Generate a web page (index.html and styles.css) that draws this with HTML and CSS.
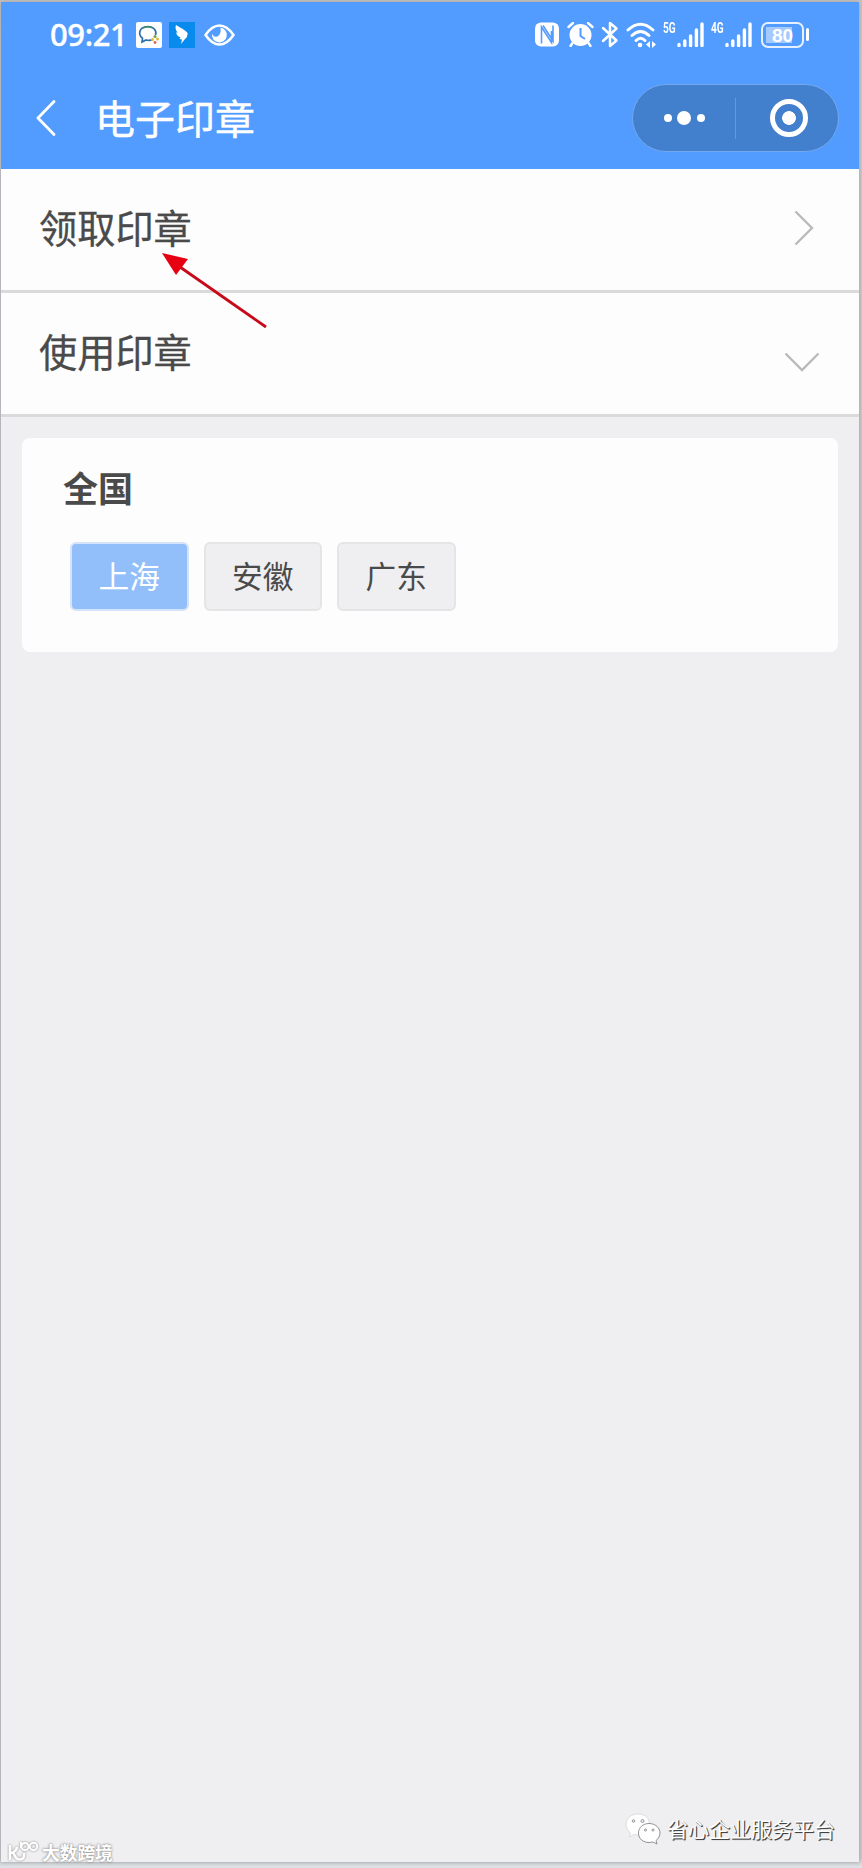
FILE: index.html
```
<!DOCTYPE html>
<html lang="zh-CN">
<head>
    <meta charset="UTF-8">
    <meta name="viewport" content="width=device-width, initial-scale=1.0">
    <title>电子印章</title>
    <link rel="stylesheet" href="styles.css">
</head>
<body>
    <div class="screen">
        <div class="header">
            <div class="status-bar">
                <span class="time">09:21</span>
                <svg class="app-icon" width="26" height="26" viewBox="0 0 26 26">
                    <rect width="26" height="26" rx="2" fill="#fff"/>
                    <path d="M17 17.500Q14 19 10 18L6 20L6.500 16.300C2 13 2.500 5 11.500 4.500C18 4.500 21 9 19.500 13" fill="none" stroke="#2b70a8" stroke-width="1.700"/>
                    <path d="M7 6.200Q11 3.500 16 5.700" fill="none" stroke="#438b61" stroke-width="1.500"/>
                    <circle cx="19" cy="14.500" r="1.600" fill="#78a84b"/>
                    <circle cx="16.500" cy="17.500" r="1.500" fill="#e9bd32"/>
                    <circle cx="21.500" cy="17" r="1.500" fill="#e5b640"/>
                    <circle cx="19" cy="20.500" r="1.400" fill="#de6548"/>
                </svg>
                <svg class="app-icon" width="26" height="26" viewBox="0 0 26 26">
                    <rect width="26" height="26" fill="#098bed"/>
                    <path d="M7 3C11 6 17 8 18.500 11C19 13 17.500 14 18 15L16 17L12 22L13 17.500L10.500 17L11.500 15.500C8 14 7 12 7.500 10L9 11C6.500 8 6 6 7 3Z" fill="#fff"/>
                </svg>
                <svg class="eye" width="31" height="22" viewBox="0 0 31 22">
                    <path d="M1.500 11Q8 1.500 15.500 1.500T29.500 11Q23 20.500 15.500 20.500T1.500 11Z" fill="none" stroke="#fff" stroke-width="2.600" stroke-linejoin="round"/>
                    <path d="M16.500 3.500A7.500 7.500 0 1 1 8 9.500Q9.500 13.500 13.500 12.500Q17.500 10 16.500 3.500Z" fill="#fff"/>
                </svg>
                <div class="status-right">
                    <svg width="24" height="25" viewBox="0 0 24 25">
                        <rect x="0" y="0.500" width="24" height="24" rx="6" fill="#fff"/>
                        <path d="M6.500 21.500V5L16.500 20.500V9M8 3.500L18 19V3.500" fill="none" stroke="#529bff" stroke-width="1.600"/>
                    </svg>
                    <svg class="alarm" width="27" height="25" viewBox="0 0 27 25">
                        <circle cx="13.500" cy="13" r="11" fill="#fff"/>
                        <path d="M1.500 5L6 1M21 1L25.500 5M5.500 21L3.500 24M21.500 21L23.500 24" stroke="#fff" stroke-width="2.400" stroke-linecap="round"/>
                        <path d="M13.500 6V14L18 17" fill="none" stroke="#529bff" stroke-width="2"/>
                    </svg>
                    <svg class="bluetooth" width="18" height="27" viewBox="0 0 18 27">
                        <path d="M2 7L15.500 19.500L9 25V2L15.500 7.500L2 20" fill="none" stroke="#fff" stroke-width="2.500" stroke-linejoin="round" stroke-linecap="round"/>
                    </svg>
                    <svg class="wifi" width="31" height="26" viewBox="0 0 31 26">
                        <path d="M2 8Q14.500-3.500 27 8M6 13.500Q14.500 5.500 23 13.500M10 18.500Q14.500 14 19 18.500" fill="none" stroke="#fff" stroke-width="2.900" stroke-linecap="round"/>
                        <circle cx="14" cy="23" r="2.300" fill="#fff"/>
                        <path d="M24 19V26L20 22.500ZM26 19V26L30 22.500Z" fill="#fff"/>
                    </svg>
                    <span class="net">5G</span>
                    <svg class="signal" width="27" height="25" viewBox="0 0 27 25">
                        <path d="M2 22.500V23.500M7.800 19V23.500M13.600 14V23.500M19.400 8V23.500M25 2V23.500" stroke="#fff" stroke-width="3.400" stroke-linecap="round"/>
                    </svg>
                    <span class="net net-4g">4G</span>
                    <svg class="signal" width="27" height="25" viewBox="0 0 27 25">
                        <path d="M2 22.500V23.500M7.800 19V23.500M13.600 14V23.500M19.400 8V23.500M25 2V23.500" stroke="#fff" stroke-width="3.400" stroke-linecap="round"/>
                    </svg>
                    <div class="battery"><span>80</span></div>
                    <div class="battery-tip"></div>
                </div>
            </div>
            <div class="navbar">
                <svg class="back" width="20" height="36" viewBox="0 0 20 36">
                    <path d="M18 1.500L2 18L18 34.500" fill="none" stroke="#fff" stroke-width="2.800" stroke-linejoin="round" stroke-linecap="round"/>
                </svg>
                <h1>电子印章</h1>
                <div class="capsule">
                    <div class="half dots">
                        <i></i><i class="big"></i><i></i>
                    </div>
                    <div class="divider"></div>
                    <div class="half">
                        <div class="ring"></div>
                    </div>
                </div>
            </div>
        </div>

        <div class="row">
            <span>领取印章</span>
            <svg class="arrow-right" width="20" height="36" viewBox="0 0 20 36">
                <path d="M1.500 1.500L18 18L1.500 34.500" fill="none" stroke="#b9b9b9" stroke-width="2.300"/>
            </svg>
        </div>
        <div class="row">
            <span>使用印章</span>
            <svg class="arrow-down" width="36" height="20" viewBox="0 0 36 20">
                <path d="M1.500 1.500L18 18L34.500 1.500" fill="none" stroke="#b9b9b9" stroke-width="2.300"/>
            </svg>
        </div>

        <div class="card">
            <h2>全国</h2>
            <div class="chips">
                <div class="chip active">上海</div>
                <div class="chip">安徽</div>
                <div class="chip">广东</div>
            </div>
        </div>
    </div>

    <!-- red pointer over the first row -->
    <svg class="pointer" width="110" height="80" viewBox="0 0 110 80">
        <path d="M20 14L106 74" stroke="#c70a1a" stroke-width="2.800"/>
        <path d="M2 0L28 6L16 22Z" fill="#e60012"/>
    </svg>

    <div class="account">
        <svg width="36" height="32" viewBox="0 0 36 32">
            <path d="M13 1C5.500 1 1 6 1 11.500C1 15 3 18 5.500 20L4.500 24L9 21.500C18 23.500 24.500 18 24.500 11.500C24.500 5 20 1 13 1Z" fill="#fff" stroke="#c9c9c9" stroke-width="0.600"/>
            <path d="M24 10.500C17.500 10.500 13.500 15 13.500 20C13.500 26 18.500 29.500 24 29.500L28 29L32 31L31 27.500C33.500 25.500 35 23 35 20C35 15 30.500 10.500 24 10.500Z" fill="#fff" stroke="#777" stroke-width="0.800"/>
            <g fill="#efeff1" stroke="#777" stroke-width="0.700">
                <circle cx="8.500" cy="8" r="1.300"/><circle cx="17.500" cy="8" r="1.500"/>
                <circle cx="20.500" cy="17" r="1.100"/><circle cx="28" cy="17" r="1.100"/>
            </g>
        </svg>
        <span>省心企业服务平台</span>
    </div>

    <div class="source">
        <svg width="32" height="21" viewBox="0 0 32 21">
            <g fill="none" stroke="#fff" stroke-width="2.500">
                <path d="M2 4V19M3 12Q8 11 9 6M5 11Q8 19 12 18.500Q17 18 16 12"/>
                <path d="M13 1V7" stroke-width="1.900"/>
                <circle cx="17" cy="5.500" r="3.500" stroke-width="1.900"/>
                <circle cx="25.500" cy="5.500" r="3.700" stroke-width="1.900"/>
            </g>
        </svg>
        <span>大数跨境</span>
    </div>
</body>
</html>
```
FILE: styles.css
```
* {
    box-sizing: border-box;
}

body {
    margin: 0;
    padding: 2px 3px 6px 1px;
    height: 1868px;
    position: relative;
    overflow: hidden;
    background: linear-gradient(#c6c3bf, #c8cace 60px, #c8cace 1858px, #e0e4e8);
    font-family: "Noto Sans CJK SC", sans-serif;
    color: #4a4a4a;
}

svg {
    display: block;
    flex-shrink: 0;
}

.screen {
    height: 1860px;
    background-color: #efeff1;
    box-shadow: 0 0 4px #999c9f;
}

.header {
    height: 167px;
    background-color: #529bff;
    color: #fff;
}

.status-bar {
    height: 65px;
    padding: 0 50px 0 49px;
    display: flex;
    align-items: center;
}

.time {
    width: 86px;
    margin-top: -2px;
    font-family: "Noto Sans", sans-serif;
    font-size: 31px;
    font-weight: 500;
    line-height: 40px;
    letter-spacing: -0.4px;
    white-space: nowrap;
    -webkit-text-stroke: 0.4px #fff;
}

.app-icon {
    margin-right: 7px;
}

.eye {
    margin-left: 2px;
}

.status-right {
    display: flex;
    align-items: center;
    margin-left: auto;
}

.alarm {
    margin-left: 8px;
}

.bluetooth {
    margin-left: 7.5px;
}

.wifi {
    margin-left: 7px;
}

.net {
    width: 14px;
    margin: 0 0 14px 6px;
    font-family: Roboto, sans-serif;
    font-size: 14px;
    font-weight: 700;
    line-height: 14px;
    transform: scaleX(0.72);
    transform-origin: left;
}

.net-4g {
    margin-left: 7px;
}

.battery {
    margin-left: 9px;
    width: 43px;
    height: 26px;
    padding: 3px;
    border: 2px solid #e6f1ff;
    border-radius: 7px;
}

.battery span {
    display: block;
    height: 16px;
    background: linear-gradient(90deg, #a4caff 80%, transparent 80%);
    font: bold 19px/17px "Liberation Sans", sans-serif;
    text-align: center;
}

.battery-tip {
    width: 3px;
    height: 13px;
    margin-left: 2px;
    border-radius: 2px;
    background-color: #fff;
}

.navbar {
    height: 102px;
    padding: 0 20px 0 35px;
    display: flex;
    align-items: center;
}

.navbar h1 {
    margin: -3px 0 0 39px;
    font-size: 40px;
    font-weight: 400;
    line-height: 60px;
    -webkit-text-stroke: 0.4px #fff;
}

.capsule {
    width: 207px;
    height: 68px;
    margin-left: auto;
    display: flex;
    align-items: center;
    background-color: #427fcd;
    border: 1px solid #72a8ee;
    border-radius: 34px;
}

.half {
    flex: 1;
    display: flex;
    justify-content: center;
    align-items: center;
    gap: 5.5px;
}

.dots i {
    width: 8px;
    height: 8px;
    border-radius: 50%;
    background-color: #fff;
}

.dots .big {
    width: 14px;
    height: 14px;
}

.divider {
    width: 1px;
    height: 41px;
    background-color: #6499dd;
}

.ring {
    width: 38px;
    height: 38px;
    margin-left: 4px;
    border: 5px solid #fff;
    border-radius: 50%;
    background: radial-gradient(circle, #fff 6.5px, transparent 7.2px);
}

.row {
    height: 124px;
    padding: 0 38px 3px;
    display: flex;
    justify-content: space-between;
    align-items: center;
    background-color: #fdfdfd;
    border-bottom: 3px solid #dadada;
    font-size: 38.2px;
    line-height: 56px;
}

.row span {
    margin-top: -3px;
    -webkit-text-stroke: 0.3px #4a4a4a;
}

.arrow-right {
    margin-right: 7px;
}

.arrow-down {
    margin: 19px 1px 0 0;
}

.card {
    height: 214px;
    margin: 21px 21px 0;
    padding: 23px 41px;
    background-color: #fdfdfd;
    border-radius: 8px;
}

.card h2 {
    margin: 0;
    font-size: 35px;
    font-weight: 700;
    line-height: 52px;
}

.chips {
    display: flex;
    gap: 15px;
    margin: 29px 0 0 7px;
}

.chip {
    width: 118.5px;
    height: 69px;
    border: 2px solid #e5e5e7;
    border-radius: 6px;
    background-color: #efeff1;
    font-size: 30.7px;
    line-height: 61px;
    text-align: center;
}

.chip.active {
    background-color: #92bffa;
    border-color: #d4e3f8;
    color: #fff;
}

.pointer {
    position: absolute;
    left: 160px;
    top: 253px;
}

.account {
    position: absolute;
    right: 27px;
    bottom: 23px;
    display: flex;
    align-items: center;
    gap: 6px;
    font-size: 21px;
    line-height: 32px;
    color: #fff;
    text-shadow: 1px 1px 0 #444, 1px 1px 1px #666;
}

.account span {
    margin-top: -3px;
}

.source {
    position: absolute;
    left: 8px;
    bottom: 4px;
    display: flex;
    align-items: center;
    gap: 2px;
    font-size: 17.7px;
    font-weight: 700;
    line-height: 24px;
    color: #fff;
    text-shadow: 0 0 2px #888, 0 0 3px #aaa;
}

.source span {
    margin-top: -2px;
}

.source svg {
    margin-top: -4px;
    filter: drop-shadow(0 0 1px #888);
}
```
